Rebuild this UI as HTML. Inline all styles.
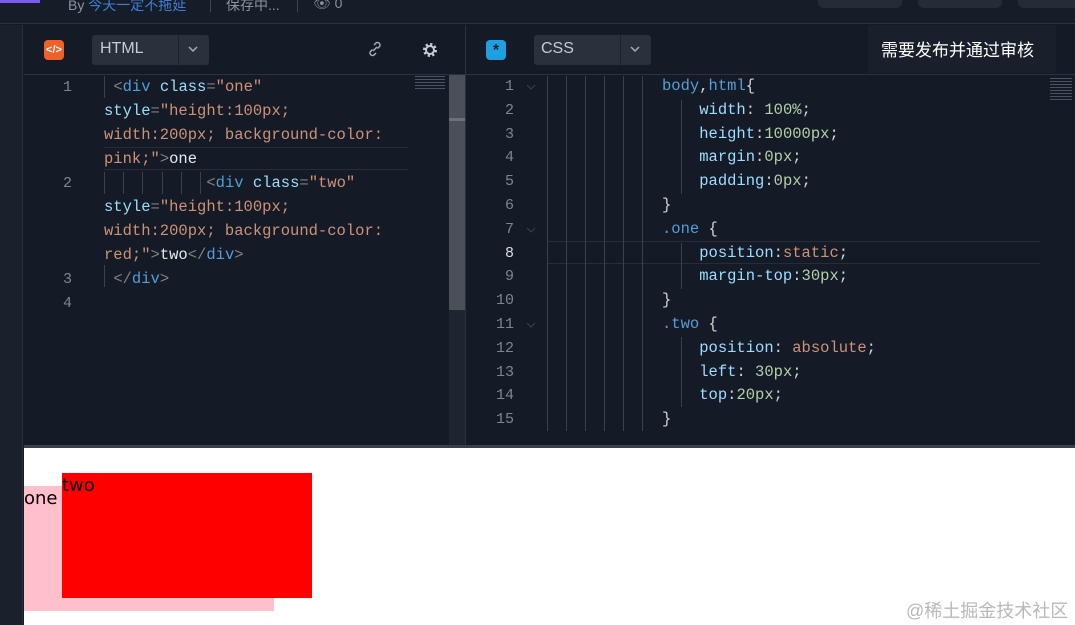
<!DOCTYPE html>
<html><head><meta charset="utf-8"><style>
*{margin:0;padding:0;box-sizing:border-box}
body{width:1075px;height:625px;overflow:hidden;background:#141b26;position:relative;font-family:"Liberation Sans","Noto Sans CJK SC",sans-serif}
.a{position:absolute}
.mono{font-family:"Liberation Mono","DejaVu Sans Mono",monospace;font-size:15.5px;white-space:pre;color:#d4d4d4;line-height:24px}
.ln{color:#7d8590;font-family:"Liberation Mono",monospace;font-size:15px;text-align:right;width:30px}
.t{color:#569cd6}.at{color:#9cdcfe}.s{color:#ce9178}.w{color:#e8e8e8}.n{color:#b5cea8}.p{color:#9cdcfe}.g{color:#808080}
.vl{position:absolute;width:1px;background:#3a414c}
</style></head><body>
<div class="a" style="left:0;top:0;width:1075px;height:24px;background:#161d29;border-bottom:1px solid #2a3240"></div>
<div class="a" style="left:0;top:0;width:40px;height:3px;background:#7b5cf0"></div>
<div class="a" style="left:68px;top:-5px;font-size:14px;color:#8a93a0">By <span style="color:#3d7fd6">今天一定不拖延</span></div>
<div class="a" style="left:210px;top:0;width:1px;height:12px;background:#444"></div>
<div class="a" style="left:226px;top:-5px;font-size:14px;color:#8a93a0">保存中...</div>
<div class="a" style="left:297px;top:0;width:1px;height:12px;background:#444"></div>
<div class="a" style="left:313px;top:-5px;font-size:14px;color:#8a93a0">👁 0</div>
<div class="a" style="left:818px;top:-6px;width:84px;height:14px;border-radius:6px;background:#252c38"></div>
<div class="a" style="left:918px;top:-6px;width:84px;height:14px;border-radius:6px;background:#252c38"></div>
<div class="a" style="left:1018px;top:-6px;width:70px;height:14px;border-radius:6px;background:#252c38"></div>
<div class="a" style="left:0;top:25px;width:23px;height:600px;background:#1a212d;border-right:1px solid #2a3240"></div>
<div class="a" style="left:24px;top:74px;width:1051px;height:1px;background:#2a3240"></div>
<div class="a" style="left:465px;top:25px;width:1px;height:422px;background:#2a3240"></div>
<div class="a" style="left:44px;top:40px;width:20px;height:20px;border-radius:4px;background:#f0602a;color:#fff;font-size:11px;font-weight:bold;text-align:center;line-height:20px">&lt;/&gt;</div>
<div class="a" style="left:92px;top:35px;width:117px;height:30px;border-radius:3px;background:#2a313c"></div>
<div class="a" style="left:178px;top:35px;width:1px;height:30px;background:#1c222c"></div>
<div class="a" style="left:100px;top:40px;font-size:16px;color:#c8ccd2">HTML</div>
<svg class="a" style="left:188px;top:45px" width="10" height="8"><path d="M1 2L5 6L9 2" stroke="#aab" stroke-width="1.5" fill="none"/></svg>
<svg class="a" style="left:367px;top:41px" width="16" height="16"><path d="M6 10L10 6M7 4l2-2a2.5 2.5 0 013.5 3.5l-2 2M9 12l-2 2a2.5 2.5 0 01-3.5-3.5l2-2" stroke="#aab" stroke-width="1.5" fill="none"/></svg>
<svg class="a" style="left:422px;top:42px" width="16" height="16"><circle cx="8" cy="8" r="5.5" fill="none" stroke="#c8ccd2" stroke-width="3" stroke-dasharray="2.2 2.1"/><circle cx="8" cy="8" r="4" fill="none" stroke="#c8ccd2" stroke-width="2"/></svg>
<div class="a" style="left:486px;top:40px;width:20px;height:20px;border-radius:4px;background:#1ea0e0;color:#0b2030;font-size:16px;font-weight:bold;text-align:center;line-height:22px">*</div>
<div class="a" style="left:534px;top:35px;width:117px;height:30px;border-radius:3px;background:#2a313c"></div>
<div class="a" style="left:620px;top:35px;width:1px;height:30px;background:#1c222c"></div>
<div class="a" style="left:541px;top:40px;font-size:16px;color:#c8ccd2">CSS</div>
<svg class="a" style="left:630px;top:45px" width="10" height="8"><path d="M1 2L5 6L9 2" stroke="#aab" stroke-width="1.5" fill="none"/></svg>
<div class="a" style="left:868px;top:25px;width:188px;height:48px;background:#1a202b"></div>
<div class="a" style="left:881px;top:36px;font-size:17px;color:#fff">需要发布并通过审核</div>
<div class="a" style="left:449px;top:75px;width:16px;height:372px;background:#1e2430"></div>
<div class="a" style="left:449px;top:75px;width:16px;height:235px;background:#4a4f58"></div>
<div class="a" style="left:449px;top:118px;width:16px;height:3px;background:#6c7078"></div>
<div class="a" style="left:104px;top:147px;width:304px;height:23px;border-top:1px solid #262d38;border-bottom:1px solid #262d38"></div>
<div class="vl" style="left:104px;top:76px;height:22px"></div>
<div class="vl" style="left:104px;top:172px;height:22px"></div>
<div class="vl" style="left:123px;top:172px;height:22px"></div>
<div class="vl" style="left:142px;top:172px;height:22px"></div>
<div class="vl" style="left:162px;top:172px;height:22px"></div>
<div class="vl" style="left:181px;top:172px;height:22px"></div>
<div class="vl" style="left:200px;top:172px;height:22px"></div>
<div class="vl" style="left:104px;top:265px;height:22px"></div>
<div class="a ln" style="left:42px;top:76px;line-height:24px">1<br><br><br><br>2<br><br><br><br>3<br>4</div>
<div class="a mono" style="left:104px;top:75px"> <span class="g">&lt;</span><span class="t">div</span> <span class="at">class</span><span class="g">=</span><span class="s">"one"</span>
<span class="at">style</span><span class="g">=</span><span class="s">"height:100px;</span>
<span class="s">width:200px; background-color:</span>
<span class="s">pink;"</span><span class="g">&gt;</span><span class="w">one</span>
           <span class="g">&lt;</span><span class="t">div</span> <span class="at">class</span><span class="g">=</span><span class="s">"two"</span>
<span class="at">style</span><span class="g">=</span><span class="s">"height:100px;</span>
<span class="s">width:200px; background-color:</span>
<span class="s">red;"</span><span class="g">&gt;</span><span class="w">two</span><span class="g">&lt;/</span><span class="t">div</span><span class="g">&gt;</span>
 <span class="g">&lt;/</span><span class="t">div</span><span class="g">&gt;</span></div>
<div class="a" style="left:415px;top:76px;width:30px;height:14px;opacity:.4;background:repeating-linear-gradient(#9ab 0 1px,transparent 1px 3px)"></div>
<div class="a" style="left:547px;top:241px;width:493px;height:23px;border-top:1px solid #262d38;border-bottom:1px solid #262d38"></div>
<div class="vl" style="left:547px;top:76px;height:355px"></div>
<div class="vl" style="left:566px;top:76px;height:355px"></div>
<div class="vl" style="left:585px;top:76px;height:355px"></div>
<div class="vl" style="left:604px;top:76px;height:355px"></div>
<div class="vl" style="left:623px;top:76px;height:355px"></div>
<div class="vl" style="left:642px;top:76px;height:355px"></div>
<div class="vl" style="left:681px;top:100px;height:94px"></div>
<div class="vl" style="left:681px;top:243px;height:46px"></div>
<div class="vl" style="left:681px;top:337px;height:70px"></div>
<div class="a ln" style="left:484px;top:75px;line-height:23.8px">1<br>2<br>3<br>4<br>5<br>6<br>7<br><span style="color:#ddd">8</span><br>9<br>10<br>11<br>12<br>13<br>14<br>15</div>
<svg class="a" style="left:526px;top:84px" width="10" height="7"><path d="M1 1L5 5L9 1" stroke="#3a4150" stroke-width="1" fill="none"/></svg>
<svg class="a" style="left:526px;top:227px" width="10" height="7"><path d="M1 1L5 5L9 1" stroke="#3a4150" stroke-width="1" fill="none"/></svg>
<svg class="a" style="left:526px;top:322px" width="10" height="7"><path d="M1 1L5 5L9 1" stroke="#3a4150" stroke-width="1" fill="none"/></svg>
<div class="a mono" style="left:662px;top:75px;line-height:23.8px"><span class="t">body</span>,<span class="t">html</span>{
    <span class="p">width</span>: <span class="n">100%</span>;
    <span class="p">height</span>:<span class="n">10000px</span>;
    <span class="p">margin</span>:<span class="n">0px</span>;
    <span class="p">padding</span>:<span class="n">0px</span>;
}
<span class="t">.one</span> {
    <span class="p">position</span>:<span class="s">static</span>;
    <span class="p">margin-top</span>:<span class="n">30px</span>;
}
<span class="t">.two</span> {
    <span class="p">position</span>: <span class="s">absolute</span>;
    <span class="p">left</span>: <span class="n">30px</span>;
    <span class="p">top</span>:<span class="n">20px</span>;
}</div>
<div class="a" style="left:1050px;top:78px;width:22px;height:22px;opacity:.4;background:repeating-linear-gradient(#9ab 0 1px,transparent 1px 3px)"></div>
<div class="a" style="left:24px;top:445px;width:1051px;height:3px;background:#3a404a"></div>
<div class="a" style="left:24px;top:448px;width:1051px;height:177px;background:#fff"></div>
<div class="a" style="left:24px;top:486px;width:250px;height:125px;background:pink"></div>
<div class="a" style="left:24px;top:488px;font-size:18px;color:#000;font-family:'DejaVu Sans',sans-serif">one</div>
<div class="a" style="left:62px;top:473px;width:250px;height:125px;background:red"></div>
<div class="a" style="left:62px;top:475px;font-size:18px;color:#000;font-family:'DejaVu Sans',sans-serif">two</div>
<div class="a" style="left:906px;top:597px;font-size:18px;color:#b8b8b8">@稀土掘金技术社区</div>
</body></html>
